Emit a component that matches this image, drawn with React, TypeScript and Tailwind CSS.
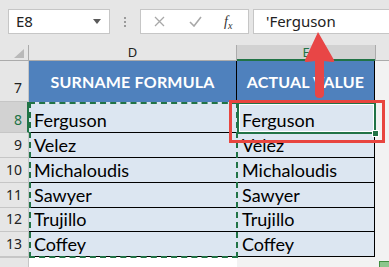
import React from 'react'

const cellFont = { fontFamily: 'Lato, "Liberation Sans", sans-serif' }
const uiFont = { fontFamily: '"Noto Sans", "Liberation Sans", sans-serif' }

const rows = [
    { n: 8, name: 'Ferguson', h: 'h-[31px]', selected: true },
    { n: 9, name: 'Velez', h: 'h-[25px]', selected: false },
    { n: 10, name: 'Michaloudis', h: 'h-[25px]', selected: false },
    { n: 11, name: 'Sawyer', h: 'h-[25px]', selected: false },
    { n: 12, name: 'Trujillo', h: 'h-[24px]', selected: false },
    { n: 13, name: 'Coffey', h: 'h-[25px]', selected: false },
]

const FormulaBar = () => (
    <div className="flex h-[45px] items-start pt-[9px] pl-[8px]" style={uiFont}>
        <div className="w-[102px] h-[25px] bg-white border border-[#c6c6c6] flex items-center justify-between pl-[7px] pr-[8px]">
            <span className="text-[15px] text-[#222]">E8</span>
            <svg width="8" height="5" viewBox="0 0 8 5"><path d="M0 0h8L4 5z" fill="#5a5a5a" /></svg>
        </div>
        <div className="w-[30px] h-[25px] flex flex-col items-center justify-center gap-[2px]">
            <span className="w-[2px] h-[2px] bg-[#9a9a9a]" />
            <span className="w-[2px] h-[2px] bg-[#9a9a9a]" />
            <span className="w-[2px] h-[2px] bg-[#9a9a9a]" />
        </div>
        <div className="w-[109px] h-[25px] bg-white border border-[#c6c6c6] flex items-center">
            <svg className="ml-[13px]" width="11" height="11" viewBox="0 0 11 11"><path d="M1 1l9 9M10 1l-9 9" stroke="#a8a8a8" strokeWidth="1.3" /></svg>
            <svg className="ml-[24px]" width="13" height="11" viewBox="0 0 13 11"><path d="M1 6l4 4 7-9" stroke="#a8a8a8" strokeWidth="1.6" fill="none" /></svg>
            <span className="ml-[22px] text-[14px] italic text-[#333]" style={{ fontFamily: '"Liberation Serif", serif' }}>f<sub className="text-[10px]">x</sub></span>
        </div>
        <div className="ml-[4px] flex-1 h-[25px] bg-white border border-r-0 border-[#c6c6c6] flex items-center pl-[12px]">
            <span className="text-[15px] text-[#222]">'Ferguson</span>
        </div>
    </div>
)

const App = () => {
    return (
        <div className="relative w-[389px] h-[267px] overflow-hidden bg-[#e6e6e6] select-none">
            <FormulaBar />

            {/* column headers */}
            <div className="flex h-[16px] text-[13px]" style={uiFont}>
                <div className="w-[29px] border-r border-b border-[#ababab] flex items-end justify-end pr-[4px] pb-[2px]">
                    <svg width="10" height="9" viewBox="0 0 10 9"><path d="M10 0v9H0z" fill="#b9b9b9" /></svg>
                </div>
                <div className="w-[208px] border-r border-b border-[#ababab] flex items-center justify-center leading-none text-[#222]">D</div>
                <div className="w-[138px] bg-[#d2d2d2] border-b-2 border-[#217346] flex items-center justify-center leading-none text-[#217346]">E</div>
                <div className="flex-1 border-l border-b border-[#ababab]" />
            </div>

            {/* row 7 - table header */}
            <div className="flex h-[41px]">
                <div className="w-[29px] border-r border-b border-[#c6c6c6] flex items-end justify-end pr-[6px] pb-[3px] text-[14px] text-[#222]" style={uiFont}>7</div>
                <div className="w-[208px] bg-[#4f81bd] border-r border-black flex items-center justify-center text-white font-bold text-[16px] tracking-[0.2px]" style={cellFont}>SURNAME FORMULA</div>
                <div className="w-[138px] bg-[#4f81bd] border-r border-black flex items-center justify-center text-white font-bold text-[16px] tracking-[0.2px]" style={cellFont}>ACTUAL VALUE</div>
                <div className="flex-1 bg-[#f2f2f2]" />
            </div>

            {/* data rows */}
            {rows.map((r) => (
                <div key={r.n} className={`flex ${r.h}`}>
                    <div
                        className={r.selected
                            ? 'w-[29px] bg-[#d2d2d2] border-r-2 border-r-[#217346] border-b border-b-[#c6c6c6] flex items-end justify-end pr-[5px] pb-[2px] text-[14px] text-[#217346]'
                            : 'w-[29px] border-r border-b border-[#c6c6c6] flex items-end justify-end pr-[6px] pb-[2px] text-[14px] text-[#222]'}
                        style={uiFont}
                    >
                        {r.n}
                    </div>
                    <div className="w-[208px] bg-[#dce6f1] border-b border-black flex items-end pl-[5px] pb-[1px] text-[18px] leading-[22px] text-black" style={cellFont}>{r.name}</div>
                    <div className="w-[138px] bg-[#dce6f1] border-b border-r border-black flex items-end pl-[5px] pb-[1px] text-[18px] leading-[22px] text-black" style={cellFont}>{r.name}</div>
                    <div className="flex-1 bg-[#f2f2f2]" />
                </div>
            ))}

            {/* below the table */}
            <div className="flex h-[20px]">
                <div className="w-[29px] border-r border-t border-[#c6c6c6]" />
                <div className="w-[208px] bg-white" />
                <div className="flex-1 bg-[#f2f2f2]" />
            </div>

            {/* copy marquee around D8:D13 */}
            <div className="absolute left-[29px] top-[102px] w-[209px] h-[156px] border-2 border-dashed border-[#217346]" />

            {/* active cell E8 */}
            <div className="absolute left-[237px] top-[102px] w-[139px] h-[32px] border-2 border-[#217346]">
                <div className="w-full h-full border border-white" />
            </div>
            <div className="absolute left-[372px] top-[130px] w-[7px] h-[7px] bg-[#217346] border border-white" />

            {/* red highlight box */}
            <div className="absolute left-[229px] top-[100px] w-[156px] h-[43px] border-[3px] border-[#e8453f]" />

            {/* red arrow */}
            <svg className="absolute left-[300px] top-[30px]" width="40" height="70" viewBox="0 0 40 70">
                <path d="M18 2 L5 30 Q4 32 7 32 L15 31 L15 64 Q15 68 19.5 68 Q24 68 24 64 L24 31 L32 32 Q35 32 34 30 Z" fill="#e84646" />
            </svg>

            {/* quick analysis icon peeking in */}
            <div className="absolute left-[379px] top-[261px] w-[12px] h-[10px] bg-[#8cc68c] border border-[#3f8f3f]" />
        </div>
    )
}

export default App
